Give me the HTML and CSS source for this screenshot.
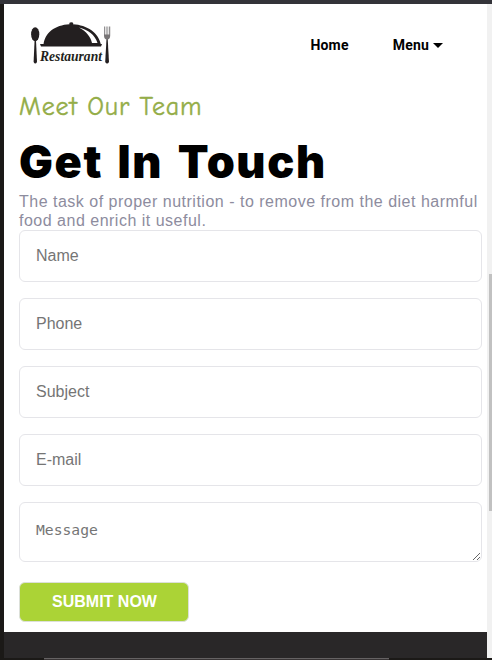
FILE: index.html
```html
<!DOCTYPE html>
<html lang="en">
<head>
<meta charset="utf-8">
<title>Restaurant - Get In Touch</title>
<link rel="stylesheet" href="styles.css">
</head>
<body>
<div class="frame">
  <div class="page">
    <header class="header">
      <svg class="logo" width="84" height="46" viewBox="0 0 84 46" role="img" aria-label="Restaurant">
        <g fill="#231f20">
          <ellipse cx="5.2" cy="12.300" rx="4.100" ry="7"/>
          <path d="M4.6 18h1.400l1 22q-1.700 3-3.400 0z"/>
          <path d="M13.5 23C14.500 11 25 3 39.500 2.300Q38.700 0.300 41.300 0.300Q44 0.500 43 2.300C57 3 69 11 71 23z"/>
          <path d="M10 22h62l-1 2.500h-60z"/>
          <path d="M76.500 17h1.200l1.300 23q-1.900 3-3.800 0z"/>
        </g>
        <path fill="#777476" d="M74 4.500v9q0 4 3.100 4t3.100-4V4.500h-1v8h-1v-8h-.7v8h-1v-8h-.7v8h-1v-8z"/>
        <path fill="#fff" d="M49 5.500C58 7.500 65 13 67.500 21h-5.500C60.500 14.500 56 9 49 5.500z"/>
        <text class="logo-text" x="10" y="38.500" textLength="62" lengthAdjust="spacingAndGlyphs">Restaurant</text>
      </svg>
      <nav class="nav">
        <a class="home">Home</a>
        <a class="menu">Menu <i class="caret"></i></a>
      </nav>
    </header>
    <main class="contact">
      <p class="eyebrow">Meet Our Team</p>
      <h1 class="title">Get In Touch</h1>
      <p class="lead">The task of proper nutrition - to remove from the diet harmful food and enrich it useful.</p>
      <form class="form">
        <input type="text" placeholder="Name">
        <input type="text" placeholder="Phone">
        <input type="text" placeholder="Subject">
        <input type="text" placeholder="E-mail">
        <textarea placeholder="Message"></textarea>
        <button type="button">SUBMIT NOW</button>
      </form>
    </main>
    <footer class="footer"></footer>
  </div>
  <div class="scrollbar"><div class="thumb"></div></div>
</div>
<div class="bottom-edge"></div>
</body>
</html>
```
FILE: styles.css
```css
* { box-sizing: border-box; }
body {
  margin: 0;
  height: 660px;
  overflow: hidden;
  background: #1b1917;
  border-top: 4px solid #333339;
  font-family: "Liberation Sans", Arial, sans-serif;
}
.frame { display: flex; height: 654px; padding-left: 4px; }
.page { width: 483px; background: #fff; display: flex; flex-direction: column; }
.header { height: 82px; display: flex; justify-content: space-between; padding: 18px 44px 0 26px; }
.logo { display: block; }
.logo-text { font: italic bold 14.5px "Liberation Serif", serif; fill: #231f20; }
.nav { display: flex; align-items: flex-start; gap: 44px; font: bold 14px/20px Roboto, sans-serif; letter-spacing: .2px; color: #000; padding-top: 13px; }
.menu { display: flex; align-items: center; gap: 4px; }
.caret { border: 5px solid transparent; border-top-color: #000; border-bottom: 0; }
.contact { height: 546px; padding: 0 5px 0 15px; }
.eyebrow {
  margin: 0;
  height: 48px;
  font: 26px/42px "Comic Sans MS", "Comic Neue", Lato, sans-serif;
  letter-spacing: .85px;
  color: #94ad48;
  white-space: nowrap;
  -webkit-text-stroke: .4px #94ad48;
}
.title {
  margin: 0;
  height: 58px;
  font: 900 45px/56px Inter, "Liberation Sans", sans-serif;
  letter-spacing: 1.6px;
  word-spacing: 4px;
  white-space: nowrap;
  color: #000;
}
.lead { margin: 0; height: 38px; font-size: 16px; line-height: 19px; letter-spacing: .5px; color: #8d8c9e; }
.form { display: flex; flex-direction: column; align-items: flex-start; gap: 16px; }
input, textarea {
  display: block;
  width: 463px;
  height: 52px;
  padding: 0 16px;
  border: 1px solid #e5e5e9;
  border-radius: 6px;
  background: #fff;
  font: 16px "Liberation Sans", Arial, sans-serif;
  outline: 0;
}
input::placeholder, textarea::placeholder { color: #757575; }
textarea { height: 60px; padding-top: 17px; font: 14.7px/19px "DejaVu Sans Mono", monospace; overflow: hidden; }
button {
  width: 170px;
  height: 40px;
  margin-top: 4px;
  padding: 0 0 0 1px;
  border: 1px solid #dce0d9;
  border-radius: 6px;
  background: #abd336;
  color: #fff;
  font: bold 16px "Liberation Sans", Arial, sans-serif;
}
.footer { height: 26px; background: #292728; }
.scrollbar { width: 5px; background: #f1f1f1; padding: 270px 0 0 2px; }
.thumb { height: 237px; background: #c1c1c1; }
.bottom-edge { width: 345px; height: 2px; margin-left: 44px; background: #383435; border-top: 1px solid #656263; }
```
